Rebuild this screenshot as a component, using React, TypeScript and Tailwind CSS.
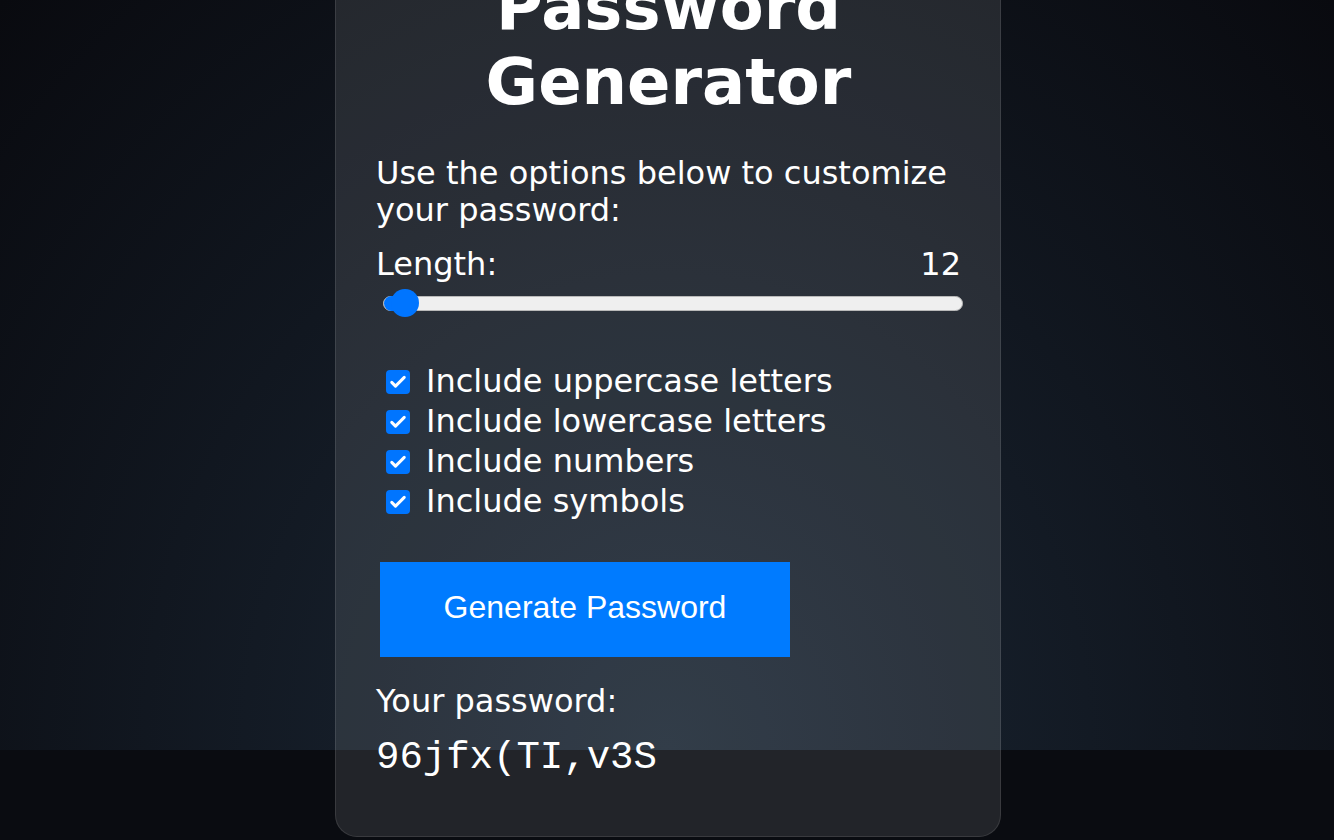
import React, { useState } from 'react';

const options = [
  { key: 'upper', label: 'Include uppercase letters' },
  { key: 'lower', label: 'Include lowercase letters' },
  { key: 'numbers', label: 'Include numbers' },
  { key: 'symbols', label: 'Include symbols' },
];

const CheckBox: React.FC<{ checked: boolean }> = ({ checked }) => (
  <span
    className={`w-[24px] h-[24px] rounded-[4px] flex items-center justify-center shrink-0 ${
      checked ? 'bg-[#0075ff]' : 'bg-white border border-gray-500'
    }`}
  >
    {checked && (
      <svg viewBox="0 0 24 24" className="w-[20px] h-[20px]" fill="none">
        <path d="M4.5 12.5l4.5 4.5L19.5 6.5" stroke="#fff" strokeWidth="3.6" strokeLinecap="round" strokeLinejoin="round" />
      </svg>
    )}
  </span>
);

export default function App() {
  const [length] = useState(12);
  const [checked] = useState<Record<string, boolean>>({ upper: true, lower: true, numbers: true, symbols: true });
  const password = '96jfx(TI,v3S';

  // slider fill position
  const pct = ((length - 10) / (64 - 10)) * 100;

  return (
    <div className="w-full h-[840px] overflow-hidden bg-[#0a0c11]" style={{ fontFamily: '"DejaVu Sans", sans-serif' }}>
      <div className="h-[750px] flex justify-center pl-[2px] bg-[radial-gradient(ellipse_at_bottom,#1b2735_0%,#090a0f_100%)]">
        {/* Card */}
        <div className="w-[666px] h-[908px] shrink-0 -mt-[71px] rounded-[22px] border border-white/10 bg-white/10 pt-10 pl-10 pr-[39px] text-white">
          <h1 className="text-[64px] font-bold leading-[74.5px] text-center">
            Password
            <br />
            Generator
          </h1>

          <p className="mt-[36px] text-[32px] leading-[37.25px]">Use the options below to customize your password:</p>

          <div className="mt-[16px] flex justify-between text-[32px] leading-[37.25px]">
            <span>Length:</span>
            <span>{length}</span>
          </div>

          {/* Range slider */}
          <div className="mt-[13px] ml-[7px] mr-[-2px] relative h-[15px] rounded-full bg-[#efefef] border border-[#b9b9b9]">
            <div className="absolute left-0 top-[-1px] h-[15px] rounded-l-full bg-[#0075ff]" style={{ width: `${pct}%` }} />
            <div
              className="absolute top-1/2 w-[28px] h-[28px] -translate-y-1/2 -translate-x-1/2 rounded-full bg-[#0075ff]"
              style={{ left: `${Math.max(pct, 3.6)}%` }}
            />
          </div>

          <div className="mt-[51px] flex flex-col">
            {options.map(o => (
              <label key={o.key} className="h-[40px] flex items-center gap-4 pl-[10px] text-[32px] leading-[37.25px]">
                <CheckBox checked={checked[o.key]} />
                <span>{o.label}</span>
              </label>
            ))}
          </div>

          <button
            className="mt-[40px] ml-1 w-[410px] h-[95px] pb-[4px] bg-[#007bff] text-white text-[32px] flex items-center justify-center"
            style={{ fontFamily: '"Liberation Sans", Arial, sans-serif' }}
          >
            Generate Password
          </button>

          <div className="mt-[26px] text-[32px] leading-[37.25px]">Your password:</div>
          <div
            className="mt-[16px] text-[39px] leading-[44px]"
            style={{ fontFamily: '"Liberation Mono", monospace' }}
          >
            {password}
          </div>
        </div>
      </div>
    </div>
  );
}
